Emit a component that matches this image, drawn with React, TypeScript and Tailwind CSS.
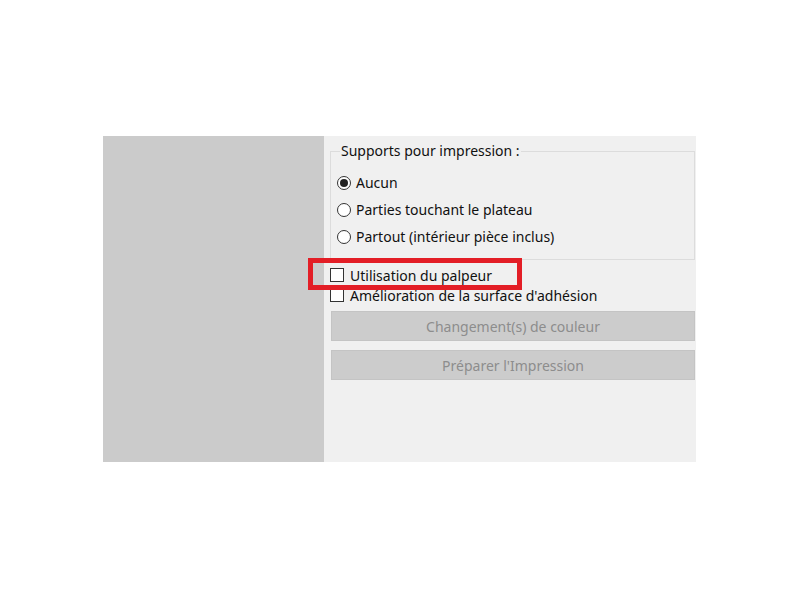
import React, { useState } from "react";

const font = { fontFamily: '"Noto Sans", "Open Sans", sans-serif' };

const Radio: React.FC<{ checked: boolean; label: string; onClick: () => void }> = ({ checked, label, onClick }) => (
  <div className="flex items-center h-[27px] cursor-default" onClick={onClick}>
    <span className="w-[14px] h-[14px] rounded-full border border-[#333] bg-white flex items-center justify-center">
      {checked && <span className="w-[8px] h-[8px] rounded-full bg-[#222]" />}
    </span>
    <span className="ml-[5px] text-[14px] text-[#111]">{label}</span>
  </div>
);

const Check: React.FC<{ label: string }> = ({ label }) => (
  <div className="flex items-center h-[20px]">
    <span className="w-[14px] h-[14px] border border-[#333] bg-white" />
    <span className="ml-[6px] text-[14px] text-[#111]">{label}</span>
  </div>
);

const App: React.FC = () => {
  const [support, setSupport] = useState(0);
  const options = ["Aucun", "Parties touchant le plateau", "Partout (intérieur pièce inclus)"];

  return (
    <div className="w-[800px] h-[600px] bg-white pt-[136px] pl-[103px]" style={font}>
      <div className="relative flex w-[593px] h-[326px]">
        <div className="w-[221px] bg-[#cbcbcb]" />
        <div className="flex-1 bg-[#f0f0f0] pl-[6px] pr-[1px] pt-[6px]">
          <fieldset className="border border-[#dcdcdc] pl-[6px] pb-[9px] m-0">
            <legend className="ml-[3px] px-[1px] text-[14px] text-[#111] leading-[18px]">
              Supports pour impression :
            </legend>
            <div className="pt-[9px]">
              {options.map((o, i) => (
                <Radio key={o} label={o} checked={support === i} onClick={() => setSupport(i)} />
              ))}
            </div>
          </fieldset>
          <div className="mt-[5px]">
            <Check label="Utilisation du palpeur" />
            <Check label="Amélioration de la surface d'adhésion" />
          </div>
          <div className="mt-[6px] pl-[1px] flex flex-col gap-[9px]">
            <button className="h-[30px] bg-[#cccccc] border border-[#c4c4c4] text-[14px] text-[#8d8d8d]">
              Changement(s) de couleur
            </button>
            <button className="h-[30px] bg-[#cccccc] border border-[#c4c4c4] text-[14px] text-[#8d8d8d]">
              Préparer l'Impression
            </button>
          </div>
        </div>
        <div className="absolute left-[205px] top-[122px] w-[214px] h-[32px] border-[5px] border-[#e31e26]" />
      </div>
    </div>
  );
};

export default App;
